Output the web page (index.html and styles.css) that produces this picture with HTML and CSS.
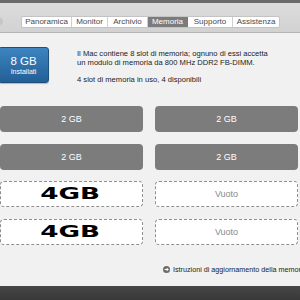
FILE: index.html
```html
<!DOCTYPE html>
<html lang="it">
<head>
<meta charset="utf-8">
<link rel="stylesheet" href="styles.css">
</head>
<body>
<div class="window">
  <div class="topbar"></div>
  <div class="toolbar">
    <span class="dot"></span>
    <nav class="tabs">
      <span class="tab t1">Panoramica</span>
      <span class="tab t2">Monitor</span>
      <span class="tab t3">Archivio</span>
      <span class="tab t4 active">Memoria</span>
      <span class="tab t5">Supporto</span>
      <span class="tab t6">Assistenza</span>
    </nav>
  </div>
  <main class="content">
    <section class="summary">
      <div class="badge">
        <span class="badge-size">8 GB</span>
        <span class="badge-label">Installati</span>
      </div>
      <div class="desc">
        <p>Il Mac contiene 8 slot di memoria; ognuno di essi accetta<br>un modulo di memoria da 800 MHz DDR2 FB-DIMM.</p>
        <p>4 slot di memoria in uso, 4 disponibili</p>
      </div>
    </section>
    <section class="slots">
      <div class="slot filled">2 GB</div>
      <div class="slot filled">2 GB</div>
      <div class="slot filled">2 GB</div>
      <div class="slot filled">2 GB</div>
      <div class="slot empty"><span class="big">4GB</span></div>
      <div class="slot empty"><span class="vuoto">Vuoto</span></div>
      <div class="slot empty"><span class="big">4GB</span></div>
      <div class="slot empty"><span class="vuoto">Vuoto</span></div>
    </section>
    <div class="link">
      <svg class="arrow" width="7" height="7" viewBox="0 0 7 7"><circle cx="3.5" cy="3.5" r="3.5" fill="#6a6a6a"/><path d="M1.6 3.5h3.6M3.6 1.9l1.6 1.6-1.6 1.6" stroke="#fff" stroke-width="1" fill="none"/></svg>
      <span>Istruzioni di aggiornamento della memoria</span>
    </div>
  </main>
  <div class="bottombar"></div>
</div>
</body>
</html>
```
FILE: styles.css
```css
* { box-sizing: border-box; }
html, body { margin: 0; padding: 0; }
body {
  width: 300px;
  height: 300px;
  overflow: hidden;
  font-family: "Liberation Sans", Arial, sans-serif;
  background: #ececec;
}
.window {
  width: 300px;
  height: 300px;
  display: flex;
  flex-direction: column;
  overflow: hidden;
}
.topbar {
  height: 3px;
  background: #6a6a6a;
  flex: none;
}
.toolbar {
  height: 30px;
  flex: none;
  background: linear-gradient(#dcdcdc, #d2d2d2);
  border-bottom: 1px solid #b4b4b4;
  display: flex;
  align-items: flex-start;
  padding-top: 13px;
}
.dot {
  width: 10px;
  height: 9px;
  margin-left: -7px;
  margin-top: 1px;
  border-radius: 50%;
  background: #c6c6c6;
  flex: none;
}
.tabs {
  display: flex;
  margin-left: 18px;
  height: 12px;
  background: #fff;
  border: 1px solid #c4c4c4;
  border-radius: 2px;
}
.tab {
  font-size: 8px;
  line-height: 10px;
  color: #4a4a4a;
  text-align: center;
  border-right: 1px solid #d0d0d0;
}
.tab:last-child { border-right: none; }
.t1 { width: 50px; }
.t2 { width: 36px; }
.t3 { width: 40px; }
.t4 { width: 40px; }
.t5 { width: 45px; }
.t6 { width: 46px; }
.tab.active {
  background: #7b7b7b;
  color: #fff;
  border-right-color: #7b7b7b;
}
.content {
  flex: 1;
  display: flex;
  flex-direction: column;
  background: #f1f1f1;
}
.summary {
  display: flex;
  margin-top: 14px;
  gap: 28px;
}
.badge {
  width: 51px;
  height: 36px;
  margin-left: -2px;
  border-radius: 3px;
  border: 1px solid #1d4f7c;
  background: linear-gradient(#3d84c0, #235f96);
  box-shadow: 0 1px 1px rgba(0,0,0,0.25);
  display: flex;
  flex-direction: column;
  align-items: center;
  justify-content: center;
  color: #fff;
}
.badge-size {
  font-size: 11.5px;
  line-height: 12px;
}
.badge-label {
  font-size: 7px;
  line-height: 9px;
}
.desc {
  font-size: 7.6px;
  line-height: 9px;
  color: #222;
  padding-top: 2px;
}
.desc p { margin: 0 0 8px 0; }
.slots {
  display: grid;
  grid-template-columns: 143px 143px;
  grid-auto-rows: 26px;
  column-gap: 12px;
  row-gap: 11.5px;
  margin-top: 14px;
}
.slot {
  border-radius: 4px;
  display: flex;
  align-items: center;
  justify-content: center;
  font-size: 9px;
}
.filled {
  background: #7c7c7c;
  color: #fff;
}
.empty {
  background: #fff;
  border: 1px dashed #8e8e8e;
}
.vuoto { color: #8a8a8a; }
.big {
  display: inline-block;
  font-family: "DejaVu Sans", sans-serif;
  font-weight: 900;
  font-size: 15px;
  line-height: 14px;
  color: #000;
  transform: scaleX(1.75);
  margin-left: -2px;
}
.link {
  margin-top: 20px;
  margin-left: 163px;
  display: flex;
  align-items: center;
  gap: 3px;
  font-size: 7.2px;
  color: #222;
  white-space: nowrap;
}
.arrow { flex: none; }
.bottombar {
  height: 14px;
  flex: none;
  background: linear-gradient(#474747, #383838);
}
```
